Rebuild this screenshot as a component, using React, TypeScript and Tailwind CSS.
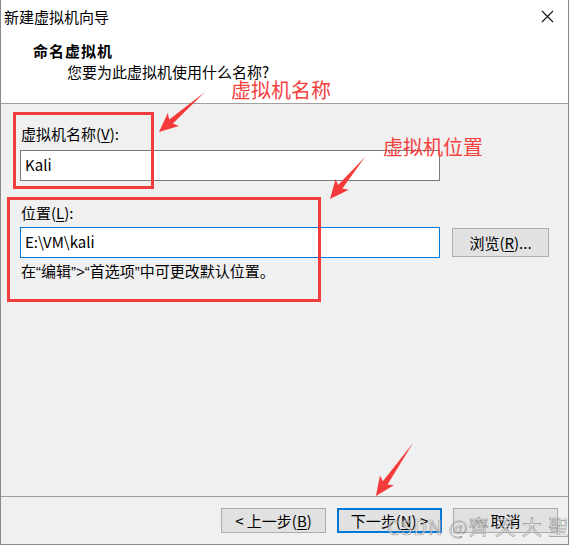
import React from "react";

// red call-out arrow: thin tail, widening shaft, barbed head at (x2, y2)
function arrowPoints(x1: number, y1: number, x2: number, y2: number) {
  const dx = x2 - x1;
  const dy = y2 - y1;
  const len = Math.hypot(dx, dy);
  const ux = dx / len;
  const uy = dy / len;
  const nx = -uy;
  const ny = ux;
  const head = 16;
  const bx = x2 - ux * head;
  const by = y2 - uy * head;
  const p = (x: number, y: number) => `${x.toFixed(1)},${y.toFixed(1)}`;
  return [
    p(x1, y1),
    p(bx + nx * 2.8, by + ny * 2.8),
    p(bx - ux * 3 + nx * 8.5, by - uy * 3 + ny * 8.5),
    p(x2, y2),
    p(bx - ux * 3 - nx * 8.5, by - uy * 3 - ny * 8.5),
    p(bx - nx * 2.8, by - ny * 2.8),
  ].join(" ");
}

function Key({ k }: { k: string }) {
  return <span className="underline underline-offset-2 decoration-1">{k}</span>;
}

function Button({ children, primary }: { children: React.ReactNode; primary?: boolean }) {
  return (
    <button
      className={
        primary
          ? "h-[25px] w-[105px] border-2 border-[#0078d7] bg-[#e1e1e1] text-[15px] leading-none text-black"
          : "h-[25px] w-[105px] border border-[#adadad] bg-[#e1e1e1] text-[15px] leading-none text-black"
      }
    >
      {children}
    </button>
  );
}

export default function App() {
  return (
    <div className="relative h-[546px] w-[570px] bg-white font-['Noto_Sans_CJK_SC',sans-serif] text-black">
      <div className="flex h-[545px] w-[569px] flex-col border-x border-b border-[#8a8a8a]">
        {/* header */}
        <div className="h-[104px] border-b border-[#a0a0a0] bg-white">
          <div className="flex h-[32px] items-center justify-between pl-[3px] pr-[14px]">
            <span className="text-[15px] leading-none">新建虚拟机向导</span>
            <svg width="13" height="13" viewBox="0 0 13 13">
              <path d="M1 1 L12 12 M12 1 L1 12" stroke="#111" strokeWidth="1.1" />
            </svg>
          </div>
          <div className="mt-[9px] pl-[32px] text-[15px] font-bold leading-[20px] tracking-[1px]">命名虚拟机</div>
          <div className="mt-[1px] pl-[66px] text-[15px] leading-[20px]">您要为此虚拟机使用什么名称?</div>
        </div>

        {/* body */}
        <div className="flex flex-1 flex-col bg-[#f0f0f0]">
          <div className="flex flex-col pl-[19px] pt-[20px]">
            <div className="pl-[1px] text-[15px] leading-[20px]">
              虚拟机名称(<Key k="V" />):
            </div>
            <div className="mt-[6px] flex h-[31px] w-[420px] items-center border border-[#7a7a7a] bg-white pl-[4px] text-[15px]">
              Kali
            </div>
            <div className="mt-[22px] pl-[1px] text-[15px] leading-[20px]">
              位置(<Key k="L" />):
            </div>
            <div className="mt-[4px] flex items-center">
              <div className="flex h-[31px] w-[420px] items-center border border-[#0078d7] bg-white pl-[4px] text-[15px]">
                E:\VM\kali
              </div>
              <button className="ml-[12px] h-[29px] w-[97px] border border-[#adadad] bg-[#e1e1e1] text-[15px] leading-none">
                浏览(<Key k="R" />)...
              </button>
            </div>
            <div className="mt-[4px] pl-[1px] font-['Liberation_Sans','Noto_Sans_CJK_SC',sans-serif] text-[15px] leading-[20px]">
              在“编辑”&gt;“首选项”中可更改默认位置。
            </div>
          </div>

          <div className="flex-1" />

          {/* footer buttons */}
          <div className="flex h-[48px] justify-end gap-[11px] border-t border-[#a0a0a0] pr-[10px] pt-[11px]">
            <Button>
              &lt; 上一步(<Key k="B" />)
            </Button>
            <Button primary>
              下一步(<Key k="N" />) &gt;
            </Button>
            <Button>取消</Button>
          </div>
        </div>
      </div>

      {/* annotations */}
      <div className="absolute left-[13px] top-[112px] h-[77px] w-[141px] border-[3px] border-[#f03c3c]" />
      <div className="absolute left-[7px] top-[197px] h-[105px] w-[314px] border-[3px] border-[#f03c3c]" />
      <div className="absolute left-[231px] top-[78px] text-[20px] leading-[24px] text-[#f63f3f]">虚拟机名称</div>
      <div className="absolute left-[383px] top-[135px] text-[20px] leading-[24px] text-[#f63f3f]">虚拟机位置</div>
      <svg className="pointer-events-none absolute left-0 top-0" width="570" height="546">
        <polygon points={arrowPoints(205, 92, 159, 132)} fill="#f43a3a" />
        <polygon points={arrowPoints(365, 157, 330, 199)} fill="#f43a3a" />
        <polygon points={arrowPoints(413, 443, 376, 496)} fill="#f43a3a" />
      </svg>

      {/* watermark */}
      <div className="pointer-events-none absolute left-[387px] top-[514px] text-[20px] leading-[26px] tracking-[1px] text-white/60 [-webkit-text-stroke:0.7px_rgba(90,90,90,0.6)]">
        CSDN @齊 天 大 聖
      </div>
    </div>
  );
}
